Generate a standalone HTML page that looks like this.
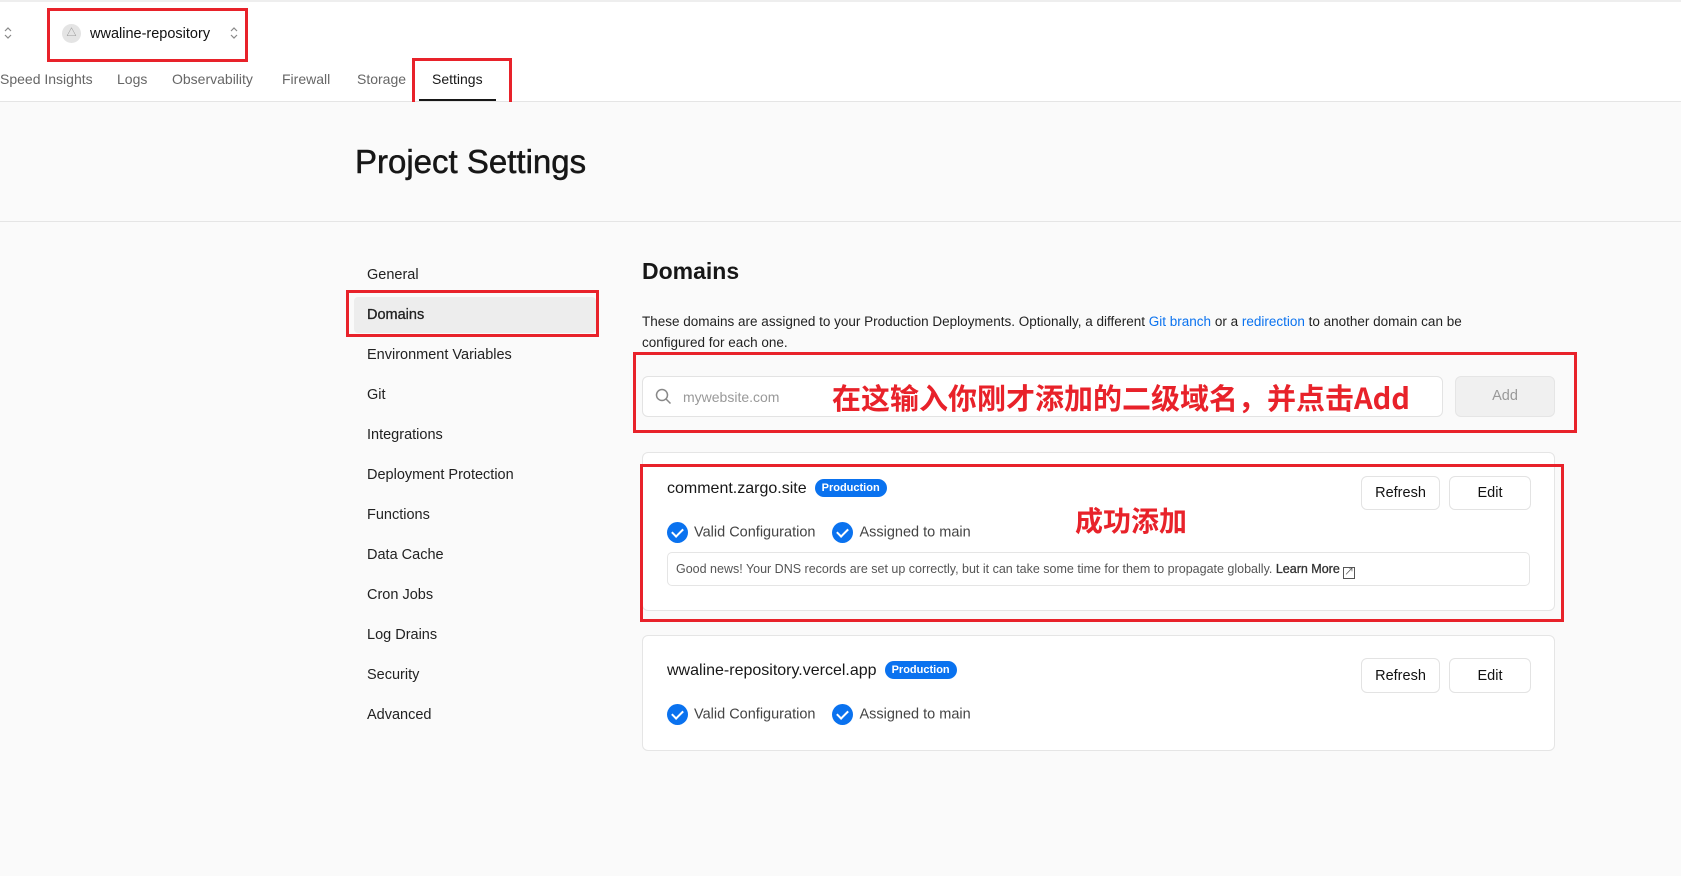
<!DOCTYPE html>
<html><head><meta charset="utf-8"><style>
*{box-sizing:border-box;margin:0;padding:0}
body{width:1681px;height:876px;overflow:hidden;background:#fafafa;font-family:"Liberation Sans","Noto Sans CJK SC",sans-serif;color:#171717;position:relative}
.a{position:absolute}
.red{position:absolute;border:3px solid #e8222a}
.nav{font-size:14px;color:#666;top:71px}
.side{left:367px;font-size:14.5px;color:#222}
.btn{position:absolute;background:#fff;border:1px solid #e3e3e3;border-radius:6px;font-size:14.5px;display:flex;align-items:center;justify-content:center;color:#111}
.badge{display:inline-block;background:#0a72ef;color:#fff;font-size:11px;font-weight:bold;padding:3px 7px;border-radius:10px;vertical-align:2px;margin-left:8px}
.chk{display:inline-block;width:21px;height:21px;border-radius:50%;background:#0a72ef;vertical-align:middle;margin-right:6px;position:relative}
.chk:after{content:"";position:absolute;left:7px;top:4px;width:5px;height:9px;border:solid #fff;border-width:0 2px 2px 0;transform:rotate(45deg)}
.card{position:absolute;background:#fff;border:1px solid #e5e5e5;border-radius:6px}
.cn{color:#e8222a;font-weight:bold;font-family:"Noto Sans CJK SC",sans-serif}
</style></head><body>
<div class="a" style="left:0;top:0;width:1681px;height:102px;background:#fff;border-top:2px solid #eee;border-bottom:1px solid #e5e5e5"></div>
<svg class="a" style="left:3px;top:26px" width="10" height="14" viewBox="0 0 10 14"><path d="M2 5l3-3 3 3M2 9l3 3 3-3" fill="none" stroke="#888" stroke-width="1.2"/></svg>
<div class="a" style="left:62px;top:24px;width:19px;height:19px;border-radius:50%;background:#e4e4e4;font-size:10px;color:#888;text-align:center;line-height:19px">△</div>
<div class="a" style="left:90px;top:26px;font-size:14.5px;color:#111">wwaline-repository</div>
<svg class="a" style="left:229px;top:26px" width="10" height="14" viewBox="0 0 10 14"><path d="M2 5l3-3 3 3M2 9l3 3 3-3" fill="none" stroke="#888" stroke-width="1.2"/></svg>
<div class="red" style="left:47px;top:8px;width:201px;height:54px"></div>
<div class="a nav" style="left:0">Speed Insights</div>
<div class="a nav" style="left:117px">Logs</div>
<div class="a nav" style="left:172px">Observability</div>
<div class="a nav" style="left:282px">Firewall</div>
<div class="a nav" style="left:357px">Storage</div>
<div class="a nav" style="left:432px;color:#171717">Settings</div>
<div class="a" style="left:419px;top:99px;width:77px;height:2px;background:#171717"></div>
<div class="red" style="left:412px;top:58px;width:100px;height:51px"></div>
<div class="a" style="left:0;top:102px;width:1681px;height:120px;background:#fafafa;border-bottom:1px solid #e5e5e5"></div>
<div class="a" style="left:355px;top:143px;font-size:33px;-webkit-text-stroke:0.5px #171717">Project Settings</div>

<div class="a" style="left:354px;top:297px;width:242px;height:36px;background:#ededed;border-radius:4px"></div>
<div class="red" style="left:346px;top:290px;width:253px;height:47px"></div>
<div class="a side" style="top:267px">General</div>
<div class="a side" style="top:307px;-webkit-text-stroke:0.3px #222">Domains</div>
<div class="a side" style="top:347px">Environment Variables</div>
<div class="a side" style="top:387px">Git</div>
<div class="a side" style="top:427px">Integrations</div>
<div class="a side" style="top:467px">Deployment Protection</div>
<div class="a side" style="top:507px">Functions</div>
<div class="a side" style="top:547px">Data Cache</div>
<div class="a side" style="top:587px">Cron Jobs</div>
<div class="a side" style="top:627px">Log Drains</div>
<div class="a side" style="top:667px">Security</div>
<div class="a side" style="top:707px">Advanced</div>

<div class="a" style="left:642px;top:258px;font-size:23px;font-weight:bold">Domains</div>
<div class="a" style="left:642px;top:311px;width:885px;font-size:13.5px;line-height:21px;color:#222">These domains are assigned to your Production Deployments. Optionally, a different <span style="color:#0a72ef">Git branch</span> or a <span style="color:#0a72ef">redirection</span> to another domain can be configured for each one.</div>
<div class="a" style="left:642px;top:376px;width:801px;height:41px;background:#fff;border:1px solid #e3e3e3;border-radius:6px"></div>
<svg class="a" style="left:655px;top:388px" width="17" height="17" viewBox="0 0 17 17"><circle cx="7" cy="7" r="5.5" fill="none" stroke="#888" stroke-width="1.5"/><path d="M11 11l4.5 4.5" stroke="#888" stroke-width="1.5"/></svg>
<div class="a" style="left:683px;top:389px;font-size:14px;color:#999">mywebsite.com</div>
<div class="a cn" style="left:832px;top:377px;font-size:29px;line-height:40px">在这输入你刚才添加的二级域名，并点击Add</div>
<div class="a" style="left:1455px;top:376px;width:100px;height:41px;background:#f0f0f0;border:1px solid #e5e5e5;border-radius:6px;color:#999;font-size:14.5px;text-align:center;line-height:39px">Add</div>
<div class="red" style="left:633px;top:352px;width:944px;height:81px"></div>

<div class="card" style="left:642px;top:452px;width:913px;height:159px"></div>
<div class="a" style="left:667px;top:479px;font-size:16px">comment.zargo.site<span class="badge">Production</span></div>
<div class="btn" style="left:1361px;top:476px;width:79px;height:34px">Refresh</div>
<div class="btn" style="left:1449px;top:476px;width:82px;height:34px">Edit</div>
<div class="a" style="left:667px;top:522px;font-size:14.5px;color:#444"><span class="chk"></span>Valid Configuration<span style="display:inline-block;width:17px"></span><span class="chk"></span>Assigned to main</div>
<div class="a cn" style="left:1075px;top:500px;font-size:28px;line-height:40px">成功添加</div>
<div class="a" style="left:667px;top:552px;width:863px;height:34px;border:1px solid #e5e5e5;border-radius:5px;font-size:12.5px;color:#555;padding-left:8px;line-height:32px">Good news! Your DNS records are set up correctly, but it can take some time for them to propagate globally. <span style="color:#333;-webkit-text-stroke:0.3px #333">Learn More</span> <span style="display:inline-block;border:1.3px solid #555;width:12px;height:12px;vertical-align:-2px;font-size:10px;line-height:9px;text-align:right">↗</span></div>
<div class="red" style="left:640px;top:464px;width:924px;height:158px"></div>

<div class="card" style="left:642px;top:635px;width:913px;height:116px"></div>
<div class="a" style="left:667px;top:661px;font-size:16px">wwaline-repository.vercel.app<span class="badge">Production</span></div>
<div class="btn" style="left:1361px;top:658px;width:79px;height:35px">Refresh</div>
<div class="btn" style="left:1449px;top:658px;width:82px;height:35px">Edit</div>
<div class="a" style="left:667px;top:704px;font-size:14.5px;color:#444"><span class="chk"></span>Valid Configuration<span style="display:inline-block;width:17px"></span><span class="chk"></span>Assigned to main</div>
</body></html>
